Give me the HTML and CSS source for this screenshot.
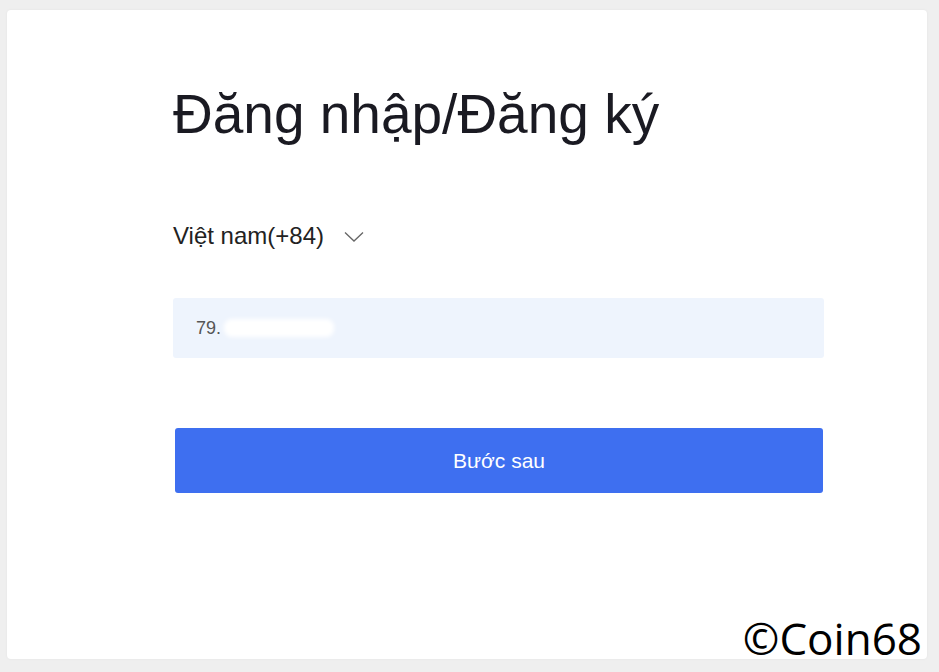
FILE: index.html
```html
<html>
    <head>
        <meta charset="utf-8">
        <link rel="stylesheet" href="styles.css">
        <title>Đăng nhập/Đăng ký</title>
    </head>
    <body>
        <div class="card">
            <div class="form">
                <h1 class="title">Đăng nhập/Đăng ký</h1>
                <div class="country">
                    <span>Việt nam(+84)</span>
                    <svg class="chevron" width="20" height="12" viewBox="0 0 20 12">
                        <path d="M1 1.5 L10 10 L19 1.5" fill="none" stroke="#666" stroke-width="1.3"/>
                    </svg>
                </div>
                <div class="phone">
                    <span class="phone-text">79.</span>
                    <span class="blur"></span>
                </div>
                <a href="#" class="button">Bước sau</a>
            </div>
            <div class="watermark">©Coin68</div>
        </div>
    </body>
</html>
```
FILE: styles.css
```css
body {
    margin: 0;
    background-color: #efefef;
    font-family: "Liberation Sans", Arial, sans-serif;
    padding: 10px 12px 13px 7px;
}
.card {
    background-color: #fff;
    border-radius: 4px;
    height: 649px;
    position: relative;
    box-shadow: 0 0 3px rgba(0, 0, 0, 0.05);
}
.form {
    padding: 72px 0 0 166px;
    width: 651px;
}
.title {
    margin: 0;
    font-size: 55px;
    font-weight: normal;
    color: #1a1a22;
    line-height: 64px;
}
.country {
    margin-top: 76px;
    display: flex;
    align-items: center;
    font-size: 24px;
    color: #222;
    gap: 20px;
}
.chevron {
    margin-top: 1px;
}
.phone {
    margin-top: 48px;
    height: 60px;
    background-color: #eef4fd;
    border-radius: 3px;
    display: flex;
    align-items: center;
    padding-left: 23px;
    font-size: 18px;
    color: #555;
}
.blur {
    width: 110px;
    height: 18px;
    margin-left: 3px;
    background-color: #fff;
    border-radius: 8px;
    filter: blur(2px);
}
.button {
    margin: 70px 1px 0 2px;
    height: 65px;
    background-color: #3e6ff0;
    color: #fff;
    text-decoration: none;
    border-radius: 3px;
    font-size: 21px;
    display: flex;
    align-items: center;
    justify-content: center;
}
.watermark {
    position: absolute;
    right: 5px;
    bottom: -6px;
    font-family: "Open Sans", "Noto Sans", sans-serif;
    font-size: 44px;
    color: #000;
    line-height: 1.2;
}
```
